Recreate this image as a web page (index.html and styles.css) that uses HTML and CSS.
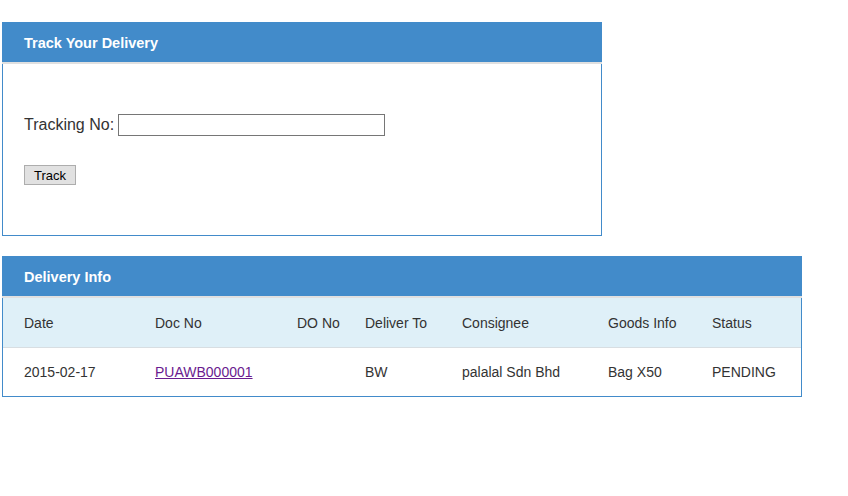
FILE: index.html
```html
<!DOCTYPE html>
<html lang="en">
<head>
    <meta charset="UTF-8">
    <title>Track Your Delivery</title>
    <link rel="stylesheet" href="styles.css">
</head>
<body>
<div class="panel track-panel">
    <div class="panel-heading">Track Your Delivery</div>
    <div class="panel-body">
        <div class="form-row">
            <label for="trackingNo">Tracking No:</label>
            <input type="text" id="trackingNo" class="tracking-input">
        </div>
        <div class="form-row">
            <button class="track-button" id="trackButton">Track</button>
        </div>
    </div>
</div>

<div class="panel info-panel">
    <div class="panel-heading">Delivery Info</div>
    <table class="info-table">
        <colgroup>
            <col style="width: 131px">
            <col style="width: 142px">
            <col style="width: 68px">
            <col style="width: 97px">
            <col style="width: 146px">
            <col style="width: 104px">
            <col>
        </colgroup>
        <thead>
            <tr>
                <th>Date</th>
                <th>Doc No</th>
                <th>DO No</th>
                <th>Deliver To</th>
                <th>Consignee</th>
                <th>Goods Info</th>
                <th>Status</th>
            </tr>
        </thead>
        <tbody>
            <tr>
                <td>2015-02-17</td>
                <td><a href="#" class="doc-link">PUAWB000001</a></td>
                <td></td>
                <td>BW</td>
                <td>palalal Sdn Bhd</td>
                <td>Bag X50</td>
                <td>PENDING</td>
            </tr>
        </tbody>
    </table>
</div>
</body>
</html>
```

FILE: styles.css
```css
body {
    font-family: "Liberation Sans", Arial, sans-serif;
    color: #333;
    margin: 22px 0 0 2px;
    padding: 0;
    background: #fff;
}
.panel {
    border: 1px solid #428bca;
    box-sizing: border-box;
    margin-bottom: 20px;
}
.track-panel {
    width: 600px;
}
.info-panel {
    width: 800px;
}
.panel-heading {
    background-color: #428bca;
    color: #fff;
    font-size: 14.5px;
    font-weight: bold;
    height: 39px;
    line-height: 40px;
    padding: 0 22px;
    margin: 0 -1px;
    border-bottom: 2px solid #e0e0e0;
}
.panel-body {
    padding: 50px 21px 50px 21px;
}
.form-row {
    display: flex;
    align-items: center;
    margin-bottom: 29px;
}
.form-row:last-child {
    margin-bottom: 0;
}
.form-row label {
    font-size: 16px;
    margin-right: 4px;
}
.tracking-input {
    width: 267px;
    height: 22px;
    box-sizing: border-box;
    border: 1px solid #767676;
    padding: 1px 2px;
    margin: 0;
}
.track-button {
    width: 52px;
    height: 20px;
    padding: 0;
    font-family: "Liberation Sans", Arial, sans-serif;
    font-size: 13px;
    color: #000;
    background-color: #e1e1e1;
    border: 1px solid #adadad;
    margin: 0;
}
.info-table {
    width: 100%;
    border-collapse: collapse;
    table-layout: fixed;
    font-size: 14px;
}
.info-table th,
.info-table td {
    text-align: left;
    padding: 16px 0 15px 21px;
    line-height: 17px;
    white-space: nowrap;
}
.info-table th {
    font-weight: normal;
    background-color: #dff0f8;
    border-bottom: 1px solid #d8dee2;
    padding-top: 17px;
}
.doc-link {
    color: #6a1b8f;
    text-decoration: underline;
}
```
